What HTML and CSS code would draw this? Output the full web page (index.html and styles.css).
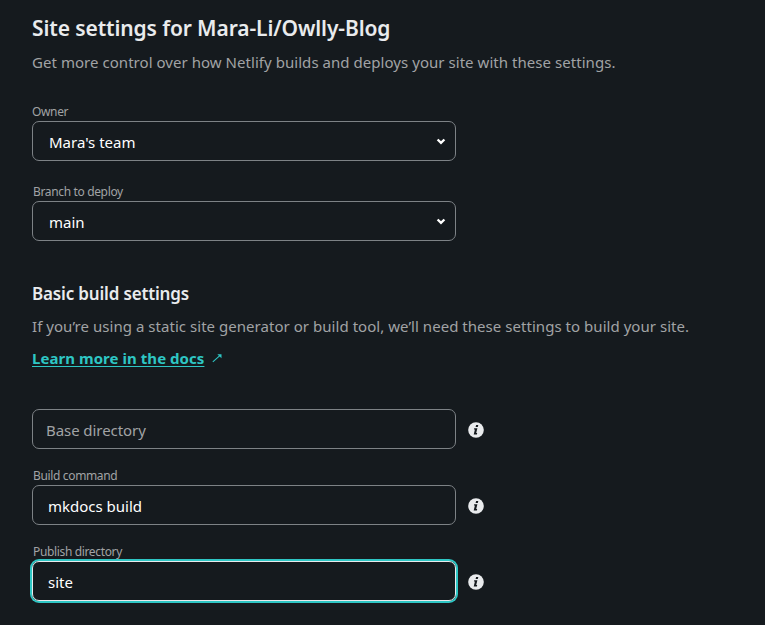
FILE: index.html
```
<!DOCTYPE html>
<html lang="en">
<head>
<meta charset="utf-8">
<title>Site settings</title>
<link rel="stylesheet" href="styles.css">
</head>
<body>
<svg width="0" height="0" class="defs"><defs>
<symbol id="chevron" viewBox="0 0 10 7"><path d="M1.6 1.5 5 4.8 8.4 1.5" fill="none" stroke="#fff" stroke-width="2.4"/></symbol>
<symbol id="info" viewBox="0 0 16 16"><circle cx="8" cy="8" r="7.8" fill="#e9ebed"/><path d="M8.1 3.1h2.2l-.5 2H7.6zM6.2 6.2h3.2l-1.2 4.9h1l-.3 1.3H5.7l1.2-4.9h-1z" fill="#151a1e"/></symbol>
</defs></svg>
<main class="settings">
  <h1 class="title">Site settings for Mara-Li/Owlly-Blog</h1>
  <p class="text intro">Get more control over how Netlify builds and deploys your site with these settings.</p>
  <section class="selects">
    <div class="field">
      <div class="label owner">Owner</div>
      <div class="box select"><span>Mara's team</span><svg class="chevron"><use href="#chevron"/></svg></div>
    </div>
    <div class="field">
      <div class="label">Branch to deploy</div>
      <div class="box select"><span>main</span><svg class="chevron"><use href="#chevron"/></svg></div>
    </div>
  </section>
  <h2 class="subtitle">Basic build settings</h2>
  <p class="text build">If you’re using a static site generator or build tool, we’ll need these settings to build your site.</p>
  <p class="docs"><a class="link">Learn more in the docs</a><svg class="arrow" viewBox="0 0 10 10"><path d="M.8 8.8 8.4 2.2" fill="none" stroke="#2ec6c4" stroke-width="1.1"/><path d="M5.3 1.2h4.2v4z" fill="#2ec6c4"/></svg></p>
  <section class="inputs">
    <div class="row"><div class="box input placeholder"><span>Base directory</span></div><svg class="info"><use href="#info"/></svg></div>
    <div class="label">Build command</div>
    <div class="row"><div class="box input"><span>mkdocs build</span></div><svg class="info"><use href="#info"/></svg></div>
    <div class="label">Publish directory</div>
    <div class="row"><div class="box input focused"><span>site</span></div><svg class="info"><use href="#info"/></svg></div>
  </section>
</main>
</body>
</html>
```
FILE: styles.css
```
* { box-sizing: border-box; }
body { margin: 0; height: 625px; overflow: hidden; background: #151a1e; color: #e9ebed; font: 15px/24px "Noto Sans", "Open Sans", sans-serif; }
.defs { display: block; }
.settings { padding: 12px 32px 0; white-space: nowrap; }
h1, h2, p { margin: 0; }
.title { height: 32px; font-size: 21px; line-height: 32px; font-weight: 600; letter-spacing: -0.11px; }
.text { color: #a1a3a5; }
.intro { margin-top: 6px; letter-spacing: 0.045px; }
.selects { margin-top: 29px; }
.field { height: 80px; }
.label { height: 18px; padding-left: 1px; font-size: 12px; line-height: 18px; letter-spacing: -0.35px; color: #a1a3a5; }
.owner { padding-left: 0; }
.box { display: flex; align-items: center; justify-content: space-between; width: 424px; height: 40px; border: 1px solid #7d8286; border-radius: 7px; color: #fff; padding: 2px 15px 0; }
.select { padding: 2px 9px 0 16px; }
.chevron { width: 10px; height: 7px; margin-top: -2px; }
.subtitle { margin-top: 17px; font-size: 17px; line-height: 28px; font-weight: 600; letter-spacing: -0.17px; }
.build { margin-top: 6px; letter-spacing: 0.04px; }
.docs { display: flex; align-items: center; margin-top: 8px; color: #2ec6c4; font-weight: 700; letter-spacing: 0.05px; }
.link { text-decoration: underline; text-underline-offset: 2px; }
.arrow { width: 10px; height: 10px; margin-left: 8px; }
.inputs { margin-top: 39px; }
.row { display: flex; align-items: center; gap: 12px; }
.info { width: 16px; height: 16px; margin-top: 2px; }
.inputs .label { height: 36px; padding-top: 18px; }
.placeholder { color: #a1a3a5; padding-left: 13px; letter-spacing: -0.07px; }
.focused { border-color: #e9ebed; box-shadow: 0 0 0 2px #2ec6c4; }
```
